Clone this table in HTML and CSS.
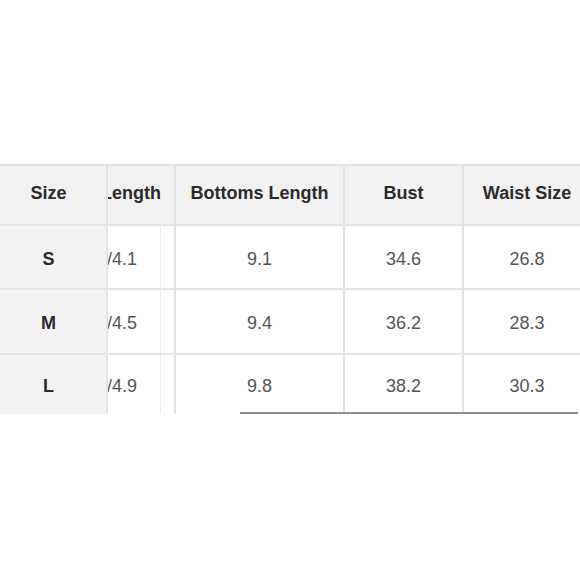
FILE: index.html
```html
<!DOCTYPE html>
<html>
<head>
<meta charset="utf-8">
<link rel="stylesheet" href="styles.css">
</head>
<body>
<div class="page">
  <div class="chart">
    <div class="cell head">Size</div>
    <div class="cell head clip"><span class="cut-l">Length</span></div>
    <div class="cell head">Bottoms Length</div>
    <div class="cell head">Bust</div>
    <div class="cell head">Waist Size</div>

    <div class="cell size">S</div>
    <div class="cell val clip split"><span class="cut-s">/4.1</span></div>
    <div class="cell val">9.1</div>
    <div class="cell val">34.6</div>
    <div class="cell val">26.8</div>

    <div class="cell size">M</div>
    <div class="cell val clip split"><span class="cut-s">/4.5</span></div>
    <div class="cell val">9.4</div>
    <div class="cell val">36.2</div>
    <div class="cell val">28.3</div>

    <div class="cell size">L</div>
    <div class="cell val clip split"><span class="cut-s">/4.9</span></div>
    <div class="cell val">9.8</div>
    <div class="cell val">38.2</div>
    <div class="cell val">30.3</div>
  </div>
  <div class="rule"></div>
</div>
</body>
</html>
```

FILE: styles.css
```css
html, body {
  margin: 0;
  padding: 0;
  background: #ffffff;
  overflow: hidden;
}

.page {
  width: 580px;
  height: 580px;
  padding-top: 164px;
  box-sizing: border-box;
  overflow: hidden;
  font-family: "Liberation Sans", Arial, sans-serif;
}

.chart {
  margin-left: -9px;
  width: 599px;
  display: grid;
  grid-template-columns: 115px 66px 167px 117px 126px;
  grid-template-rows: 58px 62px 63px 59px;
  gap: 2px;
  padding-top: 2px;
  background: #e3e3e3;
}

.cell {
  display: flex;
  align-items: center;
  justify-content: center;
  font-size: 18px;
  white-space: nowrap;
  background: #ffffff;
  color: #555555;
}

.head {
  background: #f2f2f2;
  color: #2b2b2b;
  font-weight: bold;
  padding-bottom: 3px;
}

.size {
  background: #f3f3f3;
  color: #2b2b2b;
  font-weight: bold;
  padding-top: 4px;
}

.val {
  padding-top: 4px;
}

.clip {
  justify-content: flex-start;
  overflow: hidden;
}

.split {
  background: linear-gradient(to right, #ffffff 52px, #eeeeee 52px, #eeeeee 53px, #ffffff 53px);
}

.cut-l {
  margin-left: -7px;
}

.cut-s {
  margin-left: -1px;
}

.rule {
  position: relative;
  z-index: 1;
  margin: -2px 2px 0 240px;
  height: 2px;
  background: #8e8e8e;
}
```
